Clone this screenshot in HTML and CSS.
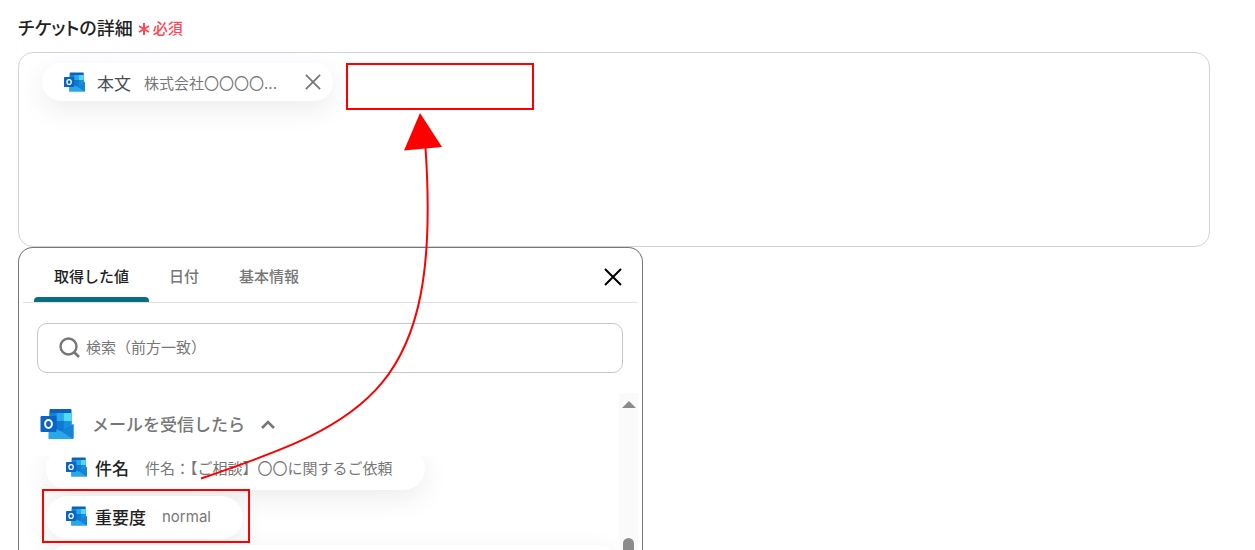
FILE: index.html
```
<!DOCTYPE html>
<html lang="ja">
<head>
	<meta charset="UTF-8">
	<title>チケットの詳細</title>
	<link rel="stylesheet" href="styles.css">
</head>
<body>
	<svg class="defs" aria-hidden="true">
		<symbol id="outlook" viewBox="0 0 33 30">
			<path d="M10 0h20a1 1 0 0 1 1 1v21H9V1a1 1 0 0 1 1-1z" fill="#0a63b8"/>
			<path d="M9 4h7v8H9z" fill="#1184d8"/>
			<path d="M16 4h7v8h-7z" fill="#28a8ea"/>
			<path d="M23 4h8v8h-8z" fill="#50d9ff"/>
			<path d="M9 12h7v11H9z" fill="#0a5fb0"/>
			<path d="M16 12h7v11h-7z" fill="#0f78d0"/>
			<path d="M23 12h8v10h-8z" fill="#1490df"/>
			<path d="M16 20l5 3 12-8v14a1 1 0 0 1-1 1H9a1 1 0 0 1-1-1v-9z" fill="#28a8ea"/>
			<path d="M33 15v14l-1 1L20 22z" fill="#1684d2"/>
			<path d="M8 29l12-7 12 8H9z" fill="#2aa7ea"/>
			<rect y="7" width="16" height="16" rx="1" fill="#0a64c4"/>
			<ellipse cx="8" cy="15" rx="3.4" ry="3.9" fill="none" stroke="#fff" stroke-width="2"/>
		</symbol>
		<symbol id="close" viewBox="0 0 18 18">
			<path d="M1 1l16 16M17 1L1 17" fill="none" stroke="currentColor" stroke-width="2"/>
		</symbol>
	</svg>

	<div class="page">
		<div class="title">
			<h1>チケットの詳細</h1>
			<span class="must">
				<svg class="star" viewBox="0 0 12 14"><path d="M6 2v12M1 5l10 6M11 5L1 11" stroke="currentColor" stroke-width="2"/></svg>
				必須
			</span>
		</div>

		<div class="editor">
			<div class="tag">
				<svg class="logo"><use href="#outlook"/></svg>
				<span class="tag-name">本文</span>
				<span class="tag-value">株式会社〇〇〇〇...</span>
				<button class="tag-close" type="button" aria-label="削除"><svg><use href="#close"/></svg></button>
			</div>
		</div>

		<div class="panel">
			<div class="tabs">
				<button class="tab active" type="button">取得した値</button>
				<button class="tab" type="button">日付</button>
				<button class="tab" type="button">基本情報</button>
				<button class="panel-close" type="button" aria-label="閉じる"><svg><use href="#close"/></svg></button>
			</div>
			<label class="search">
				<svg viewBox="0 0 22 22"><circle cx="9.5" cy="9.5" r="8" fill="none" stroke="currentColor" stroke-width="2.4"/><path d="M15 15l5 5" stroke="currentColor" stroke-width="2.6"/></svg>
				<input type="text" placeholder="検索（前方一致）" aria-label="検索">
			</label>
			<div class="result">
				<div class="group">
					<button class="group-head" type="button">
						<svg class="logo-big"><use href="#outlook"/></svg>
						<span>メールを受信したら</span>
						<svg class="arrow" viewBox="0 0 14 10"><path d="M1 9l6-6 6 6" fill="none" stroke="currentColor" stroke-width="2.6"/></svg>
					</button>
					<ul class="list">
						<li class="item">
							<svg class="logo"><use href="#outlook"/></svg>
							<b>件名</b>
							<span>件名：【ご相談】〇〇に関するご依頼</span>
						</li>
						<li class="item">
							<svg class="logo"><use href="#outlook"/></svg>
							<b>重要度</b>
							<span>normal</span>
						</li>
						<li class="item wide"></li>
					</ul>
				</div>
				<div class="scroll">
					<div class="scroll-up"></div>
					<div class="scroll-thumb"></div>
				</div>
			</div>
		</div>

		<!-- 操作説明の赤枠と矢印 -->
		<svg class="guide" width="560" height="550" aria-hidden="true">
			<rect x="347" y="64" width="186" height="45"/>
			<rect x="43" y="490" width="206" height="52"/>
			<path d="M201 478.500C367 422 442 391 425.500 148"/>
			<path class="head" d="M420 113l22 34-38 3.500z"/>
		</svg>
	</div>
</body>
</html>
```
FILE: styles.css
```
*{
	margin: 0;
	padding: 0;
	box-sizing: border-box;
}
body{
	font-family: Inter, "Noto Sans CJK JP", sans-serif;
	font-size: 15px;
	color: #777;
	background: #fff;
}
ul,li{
	list-style: none;
}
button{
	font: inherit;
	color: inherit;
	background: none;
	border: 0;
	cursor: pointer;
}
svg{
	display: block;
	flex: none;
}
.defs{
	position: absolute;
	width: 0;
	height: 0;
}
.page{
	position: relative;
	height: 100vh;
	padding: 15px 45px 0 18px;
	display: flex;
	flex-direction: column;
	overflow: hidden;
}
.title{
	display: flex;
	align-items: center;
	gap: 5px;
	height: 24px;
	margin-bottom: 13px;
}
.title h1{
	font-size: 18px;
	font-weight: 500;
	font-feature-settings: "palt";
	color: #222;
}
.must{
	display: flex;
	align-items: center;
	gap: 3px;
	padding-top: 1px;
	font-weight: 500;
	color: #ff4757;
}
.star{
	width: 12px;
	height: 14px;
}
.editor{
	flex: none;
	height: 195px;
	padding: 10px 23px;
	border: 1px solid #ced3dc;
	border-radius: 15px;
}
.tag{
	display: inline-flex;
	align-items: center;
	height: 38px;
	padding: 0 12px 0 22px;
	border-radius: 19px;
	background: #fff;
	box-shadow: 0 8px 28px rgba(0,0,0,0.08);
}
.logo{
	width: 21px;
	height: 20px;
}
.tag-name{
	margin-left: 12px;
	font-size: 17px;
	color: #495057;
}
.tag-value{
	margin-left: 13px;
}
.tag-close{
	margin-left: 28px;
	color: #777;
}
.tag-close svg{
	width: 16px;
	height: 16px;
}
.panel{
	flex: 1;
	min-height: 0;
	width: 100%;
	max-width: 625px;
	display: flex;
	flex-direction: column;
	background: #fff;
	border: 1px solid #777;
	border-bottom: 0;
	border-radius: 15px 15px 0 0;
}
.tabs{
	display: flex;
	flex: none;
	height: 55px;
	margin: 0 4px;
	padding: 0 11px;
	border-bottom: 1px solid #e2e2e2;
}
.tab{
	padding: 1px 20px 0;
	font-weight: 500;
	position: relative;
}
.tab.active{
	color: #222;
}
.tab.active::after{
	content: "";
	position: absolute;
	left: 0;
	right: 0;
	bottom: 0;
	height: 5px;
	border-radius: 4px 4px 0 0;
	background: #0b6e80;
}
.panel-close{
	margin-left: auto;
	padding: 4px 5px 0;
	color: #000;
}
.panel-close svg{
	width: 18px;
	height: 18px;
}
.search{
	display: flex;
	align-items: center;
	flex: none;
	height: 50px;
	margin: 20px 19px 20px 18px;
	padding: 0 21px 1px;
	border: 1px solid #c4c6c9;
	border-radius: 10px;
}
.search svg{
	width: 22px;
	height: 22px;
}
.search input{
	flex: 1;
	min-width: 0;
	margin-left: 5px;
	font: inherit;
	border: 0;
	outline: 0;
	background: none;
}
.search input::placeholder{
	color: #777;
}
.result{
	display: flex;
	flex: 1;
	min-height: 0;
	padding-right: 4px;
}
.group{
	flex: 1;
	min-width: 0;
	overflow: hidden;
}
.group-head{
	position: relative;
	z-index: 1;
	display: flex;
	align-items: center;
	width: 100%;
	height: 63px;
	padding: 0 21px 2px;
	background: #fff;
	font-size: 17px;
	font-weight: 500;
}
.logo-big{
	width: 34px;
	height: 30px;
	margin-right: 18px;
}
.arrow{
	width: 14px;
	height: 10px;
	margin-left: 16px;
}
.list{
	display: flex;
	flex-direction: column;
	align-items: flex-start;
	gap: 6px;
	margin-top: -9px;
	padding-left: 27px;
}
.item{
	display: flex;
	align-items: center;
	height: 43px;
	padding: 0 32px 3px 20px;
	border-radius: 22px;
	background: #fff;
	box-shadow: 0 8px 28px rgba(0,0,0,0.08);
}
.item b{
	margin: 0 16px 0 8px;
	font-size: 17px;
	font-weight: 500;
	color: #222;
}
.item.wide{
	width: 100%;
}
.scroll{
	display: flex;
	flex-direction: column;
	align-items: center;
	flex: none;
	width: 19px;
	padding-top: 8px;
	overflow: hidden;
	background: #fafafa;
}
.scroll-up{
	border: 7px solid transparent;
	border-top: 0;
	border-bottom: 7px solid #8b8b8b;
}
.scroll-thumb{
	flex: none;
	width: 11px;
	height: 60px;
	margin-top: 130px;
	border-radius: 6px;
	background: #8b8b8b;
}
.guide{
	position: absolute;
	z-index: 2;
	top: 0;
	left: 0;
	fill: none;
	stroke: #f00;
	stroke-width: 2;
	pointer-events: none;
}
.guide .head{
	fill: #f00;
	stroke: none;
}
```
